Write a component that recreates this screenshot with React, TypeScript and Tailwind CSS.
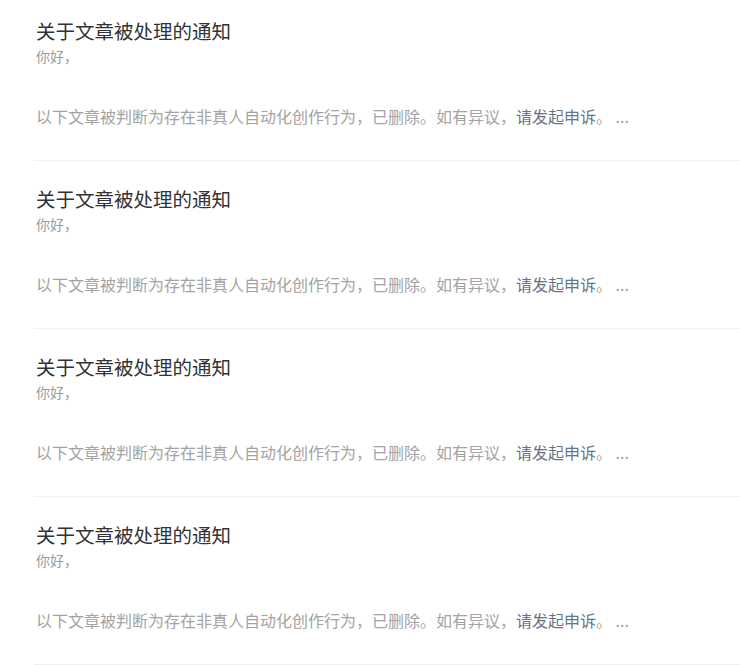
import React from "react";

const items = [0, 1, 2, 3];

export default function App() {
  return (
    <div
      className="w-[740px] h-[665px] bg-white overflow-hidden"
      style={{ fontFamily: '"Noto Sans CJK SC", "Noto Sans", sans-serif' }}
    >
      <div className="pl-[34px]">
        {items.map((i) => (
          <div
            key={i}
            className="pt-[25px] first:pt-[18px] pb-[33px] border-b border-[#f0f0f0] pl-[2px]"
          >
            <div className="text-[19.5px] leading-[26px] text-[#333333] whitespace-nowrap">
              关于文章被处理的通知
            </div>
            <div className="mt-[2px] text-[14px] leading-[20px] text-[#9a9a9a]">你好，</div>
            <div className="mt-[39px] text-[16px] leading-[22px] text-[#a3a3a3] whitespace-nowrap">
              以下文章被判断为存在非真人自动化创作行为，已删除。如有异议，
              <span className="text-[#6b7487]">请发起申诉</span>。&nbsp;...
            </div>
          </div>
        ))}
      </div>
    </div>
  );
}
